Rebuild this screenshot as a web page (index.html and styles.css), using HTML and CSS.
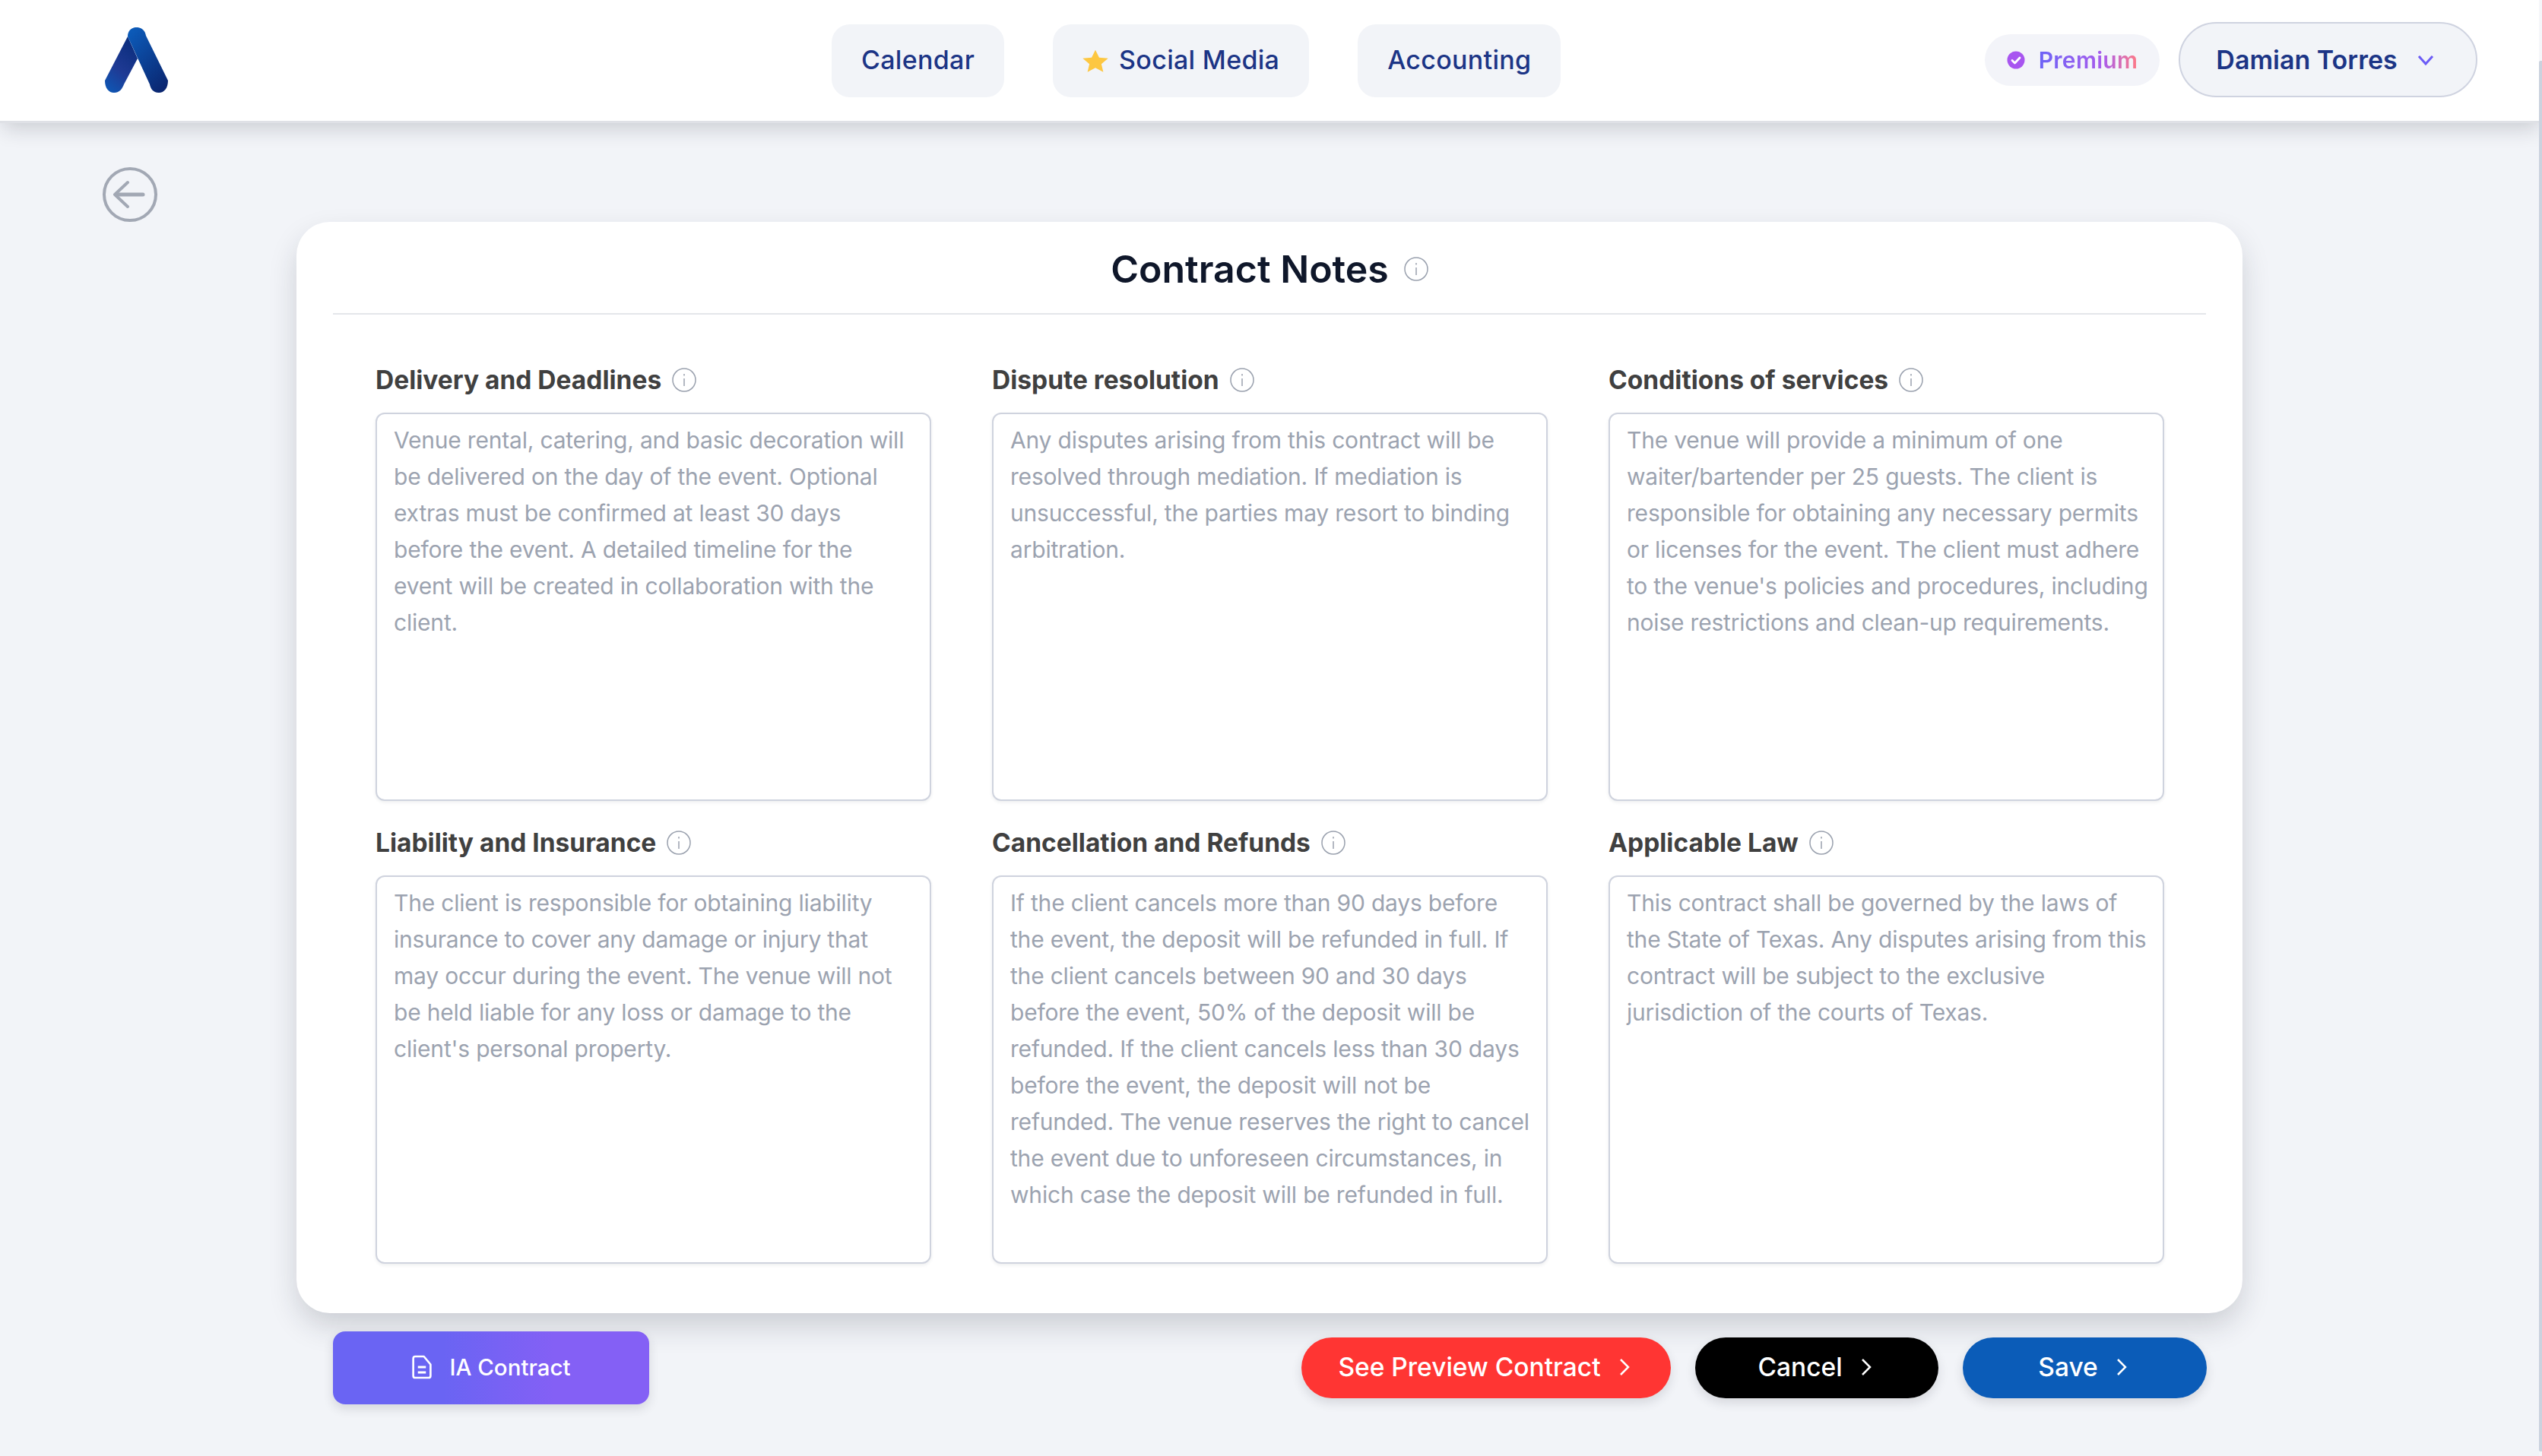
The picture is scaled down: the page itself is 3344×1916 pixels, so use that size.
FILE: index.html
```html
<!DOCTYPE html>
<html lang="en">
<head>
<meta charset="utf-8">
<title>Contract Notes</title>
<link rel="stylesheet" href="styles.css">
</head>
<body>
<header class="topbar">
  <svg class="logo" viewBox="0 0 83 86" width="83" height="86">
    <defs>
      <linearGradient id="lgA" x1="0" y1="1" x2="0.5" y2="0"><stop offset="0" stop-color="#0c5ab8"/><stop offset="0.5" stop-color="#1f3a94"/><stop offset="1" stop-color="#0d2f80"/></linearGradient>
      <linearGradient id="lgB" x1="0.2" y1="0" x2="0.8" y2="1"><stop offset="0" stop-color="#0c5ab8"/><stop offset="1" stop-color="#0a2670"/></linearGradient>
    </defs>
    <path d="M30 12L0 70C0 80 5 86 12 86C20 86 23 80 25 75L43 41Z" fill="url(#lgA)"/>
    <path d="M30 12C30 -4 52 -4 54 11L83 70C83 80 78 86 71 86C63 86 60 80 59 75Z" fill="url(#lgB)"/>
  </svg>
  <nav class="nav">
    <a class="nav-item">Calendar</a>
    <a class="nav-item">
      <svg class="star" viewBox="1 1 22 21" width="34" height="30" preserveAspectRatio="none"><path d="M12 1.5l3.2 7 7.6.8-5.7 5.1 1.600 7.500L12 18l-6.700 3.900 1.600-7.500L1.200 9.300l7.600-.8z" fill="#fdc741"/></svg>
      Social Media
    </a>
    <a class="nav-item">Accounting</a>
  </nav>
  <div class="account">
    <div class="premium">
      <svg viewBox="0 0 24 24" width="24" height="24"><circle cx="12" cy="12" r="11.500" fill="#a855f0"/><path d="M7 12.500l3.500 3.500 6.500-7" fill="none" stroke="#fff" stroke-width="2.800" stroke-linecap="round" stroke-linejoin="round"/></svg>
      <span class="premium-text">Premium</span>
    </div>
    <div class="user">
      <span>Damian Torres</span>
      <svg viewBox="0 0 22 14" width="22" height="14"><path d="M2 2l9 10 9-10" fill="none" stroke="#6c5cf6" stroke-width="3"/></svg>
    </div>
  </div>
</header>

<main class="page">
  <svg class="back" viewBox="0 0 72 72" width="72" height="72">
    <circle cx="36" cy="36" r="34" fill="none" stroke="#a2a8b4" stroke-width="4"/>
    <path d="M53 36H18" fill="none" stroke="#a2a8b4" stroke-width="5" stroke-linecap="round"/>
    <path d="M33 20L16 36l17 16" fill="none" stroke="#a2a8b4" stroke-width="4" stroke-linecap="round" stroke-linejoin="round"/>
  </svg>

  <section class="card">
    <h1 class="card-title">Contract Notes <svg class="info" viewBox="0 0 32 32"><circle cx="16" cy="16" r="15" fill="none" stroke="#9aa1ae" stroke-width="1.500"/><path d="M16 14v10M16 8v2.500" stroke="#9aa1ae" stroke-width="1.500"/></svg></h1>
    <div class="grid">
      <div class="field">
        <div class="label">Delivery and Deadlines <svg class="info" viewBox="0 0 32 32"><circle cx="16" cy="16" r="15" fill="none" stroke="#9aa1ae" stroke-width="1.500"/><path d="M16 14v10M16 8v2.500" stroke="#9aa1ae" stroke-width="1.500"/></svg></div>
        <div class="box">Venue rental, catering, and basic decoration will<br>be delivered on the day of the event. Optional<br>extras must be confirmed at least 30 days<br>before the event. A detailed timeline for the<br>event will be created in collaboration with the<br>client.</div>
      </div>
      <div class="field">
        <div class="label">Dispute resolution <svg class="info" viewBox="0 0 32 32"><circle cx="16" cy="16" r="15" fill="none" stroke="#9aa1ae" stroke-width="1.500"/><path d="M16 14v10M16 8v2.500" stroke="#9aa1ae" stroke-width="1.500"/></svg></div>
        <div class="box">Any disputes arising from this contract will be<br>resolved through mediation. If mediation is<br>unsuccessful, the parties may resort to binding<br>arbitration.</div>
      </div>
      <div class="field">
        <div class="label">Conditions of services <svg class="info" viewBox="0 0 32 32"><circle cx="16" cy="16" r="15" fill="none" stroke="#9aa1ae" stroke-width="1.500"/><path d="M16 14v10M16 8v2.500" stroke="#9aa1ae" stroke-width="1.500"/></svg></div>
        <div class="box">The venue will provide a minimum of one<br>waiter/bartender per 25 guests. The client is<br>responsible for obtaining any necessary permits<br>or licenses for the event. The client must adhere<br>to the venue's policies and procedures, including<br>noise restrictions and clean-up requirements.</div>
      </div>
      <div class="field">
        <div class="label">Liability and Insurance <svg class="info" viewBox="0 0 32 32"><circle cx="16" cy="16" r="15" fill="none" stroke="#9aa1ae" stroke-width="1.500"/><path d="M16 14v10M16 8v2.500" stroke="#9aa1ae" stroke-width="1.500"/></svg></div>
        <div class="box">The client is responsible for obtaining liability<br>insurance to cover any damage or injury that<br>may occur during the event. The venue will not<br>be held liable for any loss or damage to the<br>client's personal property.</div>
      </div>
      <div class="field">
        <div class="label">Cancellation and Refunds <svg class="info" viewBox="0 0 32 32"><circle cx="16" cy="16" r="15" fill="none" stroke="#9aa1ae" stroke-width="1.500"/><path d="M16 14v10M16 8v2.500" stroke="#9aa1ae" stroke-width="1.500"/></svg></div>
        <div class="box">If the client cancels more than 90 days before<br>the event, the deposit will be refunded in full. If<br>the client cancels between 90 and 30 days<br>before the event, 50% of the deposit will be<br>refunded. If the client cancels less than 30 days<br>before the event, the deposit will not be<br>refunded. The venue reserves the right to cancel<br>the event due to unforeseen circumstances, in<br>which case the deposit will be refunded in full.</div>
      </div>
      <div class="field">
        <div class="label">Applicable Law <svg class="info" viewBox="0 0 32 32"><circle cx="16" cy="16" r="15" fill="none" stroke="#9aa1ae" stroke-width="1.500"/><path d="M16 14v10M16 8v2.500" stroke="#9aa1ae" stroke-width="1.500"/></svg></div>
        <div class="box">This contract shall be governed by the laws of<br>the State of Texas. Any disputes arising from this<br>contract will be subject to the exclusive<br>jurisdiction of the courts of Texas.</div>
      </div>
    </div>
  </section>

  <div class="actions">
    <button class="btn-ia">
      <svg viewBox="0 0 32 36" width="28" height="34"><path d="M3 5a3 3 0 0 1 3-3h13l10 12v17a3 3 0 0 1-3 3H6a3 3 0 0 1-3-3z" fill="none" stroke="#fff" stroke-width="3" stroke-linejoin="round"/><path d="M10 18h12M10 26h12" stroke="#fff" stroke-width="3.500"/></svg>
      IA Contract
    </button>
    <div class="actions-right">
      <button class="pill pill-red">See Preview Contract <svg viewBox="0 0 14 24" width="14" height="24"><path d="M2 2l10 10L2 22" fill="none" stroke="#fff" stroke-width="2.500"/></svg></button>
      <button class="pill pill-black">Cancel <svg viewBox="0 0 14 24" width="14" height="24"><path d="M2 2l10 10L2 22" fill="none" stroke="#fff" stroke-width="2.500"/></svg></button>
      <button class="pill pill-blue">Save <svg viewBox="0 0 14 24" width="14" height="24"><path d="M2 2l10 10L2 22" fill="none" stroke="#fff" stroke-width="2.500"/></svg></button>
    </div>
  </div>
</main>
<div class="scrollbar"><div class="scrollbar-thumb"></div></div>
</body>
</html>
```

FILE: styles.css
```css
* { box-sizing: border-box; }
html, body { margin: 0; height: 100%; }
body {
  background: #f2f4f8;
  font-family: "Inter", "Open Sans", sans-serif;
  overflow: hidden;
}
.topbar {
  height: 162px;
  background: #fff;
  border-bottom: 3px solid #dfe1e6;
  box-shadow: 0 10px 26px -4px rgba(30, 35, 50, 0.2);
  display: flex;
  align-items: center;
  padding: 0 85px 2px 138px;
  position: relative;
}
.logo { flex: none; margin-top: 1px; }
.nav {
  position: absolute;
  left: 1094px;
  top: 32px;
  display: flex;
  gap: 64px;
}
.nav-item {
  height: 96px;
  padding: 0 39px 3px;
  border-radius: 24px;
  background: #f2f4f8;
  color: #1c3586;
  font-size: 34px;
  letter-spacing: 0.3px;
  font-weight: 500;
  display: flex;
  align-items: center;
  gap: 14px;
}
.star { flex: none; margin-top: 3px; }
.account { margin-left: auto; display: flex; align-items: center; gap: 25px; }
.premium {
  width: 230px;
  height: 68px;
  border-radius: 34px;
  background: #f3f4f9;
  display: flex;
  align-items: center;
  justify-content: center;
  gap: 18px;
}
.premium-text {
  font-size: 30px;
  letter-spacing: 0.3px;
  font-weight: 600;
  background: linear-gradient(90deg, #6c63f6 0%, #a85cec 65%, #ff7a85 100%);
  -webkit-background-clip: text;
  background-clip: text;
  color: transparent;
}
.user {
  width: 393px;
  height: 99px;
  border-radius: 50px;
  background: #f2f4f8;
  border: 2px solid #cfd3e0;
  color: #1c3586;
  font-size: 34px;
  font-weight: 600;
  display: flex;
  align-items: center;
  justify-content: center;
  gap: 26px;
  padding-right: 8px;
}
.page { padding: 58px 0 0 135px; }
.back { display: block; }
.card {
  width: 2560px;
  height: 1436px;
  margin: 0 0 0 255px;
  background: #fff;
  border-radius: 44px;
  box-shadow: 0 18px 40px -4px rgba(30, 35, 50, 0.2);
  padding: 0 48px;
}
.card-title {
  height: 122px;
  margin: 0;
  padding-top: 4px;
  border-bottom: 2px solid #e4e6ea;
  color: #0f172a;
  font-size: 50px;
  font-weight: 600;
  display: flex;
  align-items: center;
  justify-content: center;
  gap: 14px;
}
.info { width: 32px; height: 32px; flex: none; margin-left: 6px; }
.grid {
  display: grid;
  grid-template-columns: repeat(3, 731px);
  column-gap: 80px;
  row-gap: 26px;
  padding: 57px 0 0 56px;
}
.label {
  height: 72px;
  display: flex;
  align-items: center;
  gap: 8px;
  color: #404040;
  font-size: 33.5px;
  font-weight: 700;
  padding-bottom: 14px;
}
.box {
  height: 511px;
  border: 2px solid #cfd3de;
  border-radius: 12px;
  background: #fff;
  box-shadow: 0 2px 4px rgba(40, 45, 60, 0.08);
  padding: 10px 22px;
  color: #9ca3b0;
  font-size: 30px;
  letter-spacing: -0.2px;
  line-height: 48px;
  white-space: nowrap;
}
.actions {
  width: 2465px;
  margin: 24px 0 0 303px;
  display: flex;
  justify-content: space-between;
  align-items: center;
}
button { font-family: inherit; border: 0; }
.btn-ia {
  width: 416px;
  height: 96px;
  border-radius: 16px;
  padding: 0 0 2px;
  background: linear-gradient(90deg, #6a64f3 0%, #6a64f3 35%, #8460f5 70%, #8460f5 100%);
  box-shadow: 0 6px 14px rgba(40, 45, 60, 0.14);
  color: #fff;
  font-size: 29.5px;
  font-weight: 500;
  display: flex;
  align-items: center;
  justify-content: center;
  gap: 22px;
}
.actions-right { display: flex; gap: 32px; }
.pill {
  height: 80px;
  border-radius: 40px;
  padding: 0 6px 3px 0;
  color: #fff;
  font-size: 33.5px;
  font-weight: 500;
  display: flex;
  align-items: center;
  justify-content: center;
  gap: 24px;
  box-shadow: 0 6px 14px rgba(40, 45, 60, 0.14);
}
.pill-red { width: 486px; background: #ff3533; }
.pill-black { width: 320px; background: #000; }
.pill-blue { width: 321px; background: #0b5cb8; }
.scrollbar {
  position: fixed;
  top: 0;
  right: 0;
  bottom: 0;
  width: 4px;
  background: #f5f6fa;
  padding-top: 80px;
  padding-bottom: 6px;
}
.scrollbar-thumb {
  height: 100%;
  background: #cbd2de;
  border-radius: 2px 0 0 2px;
}
```
